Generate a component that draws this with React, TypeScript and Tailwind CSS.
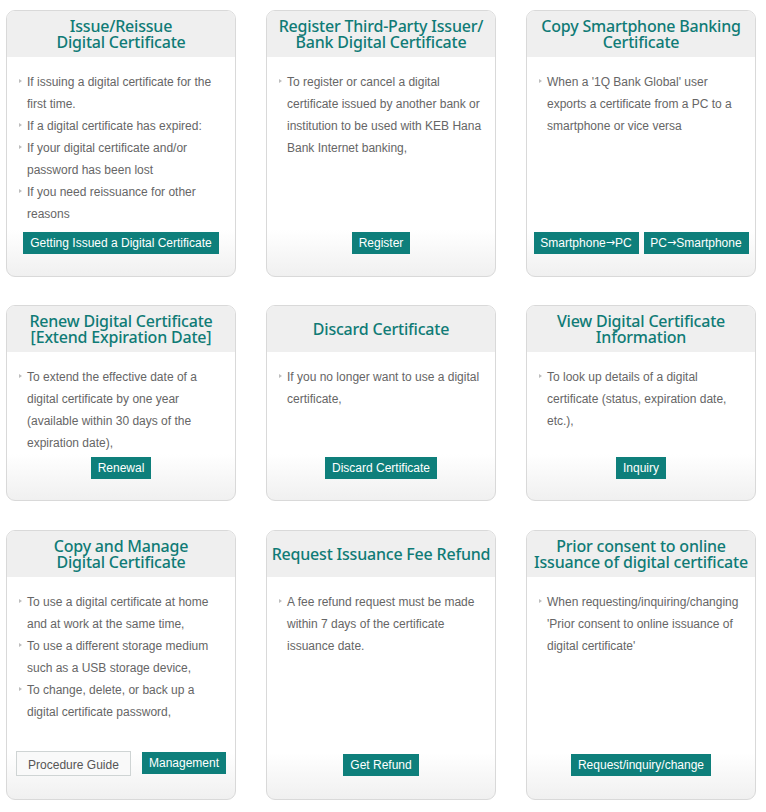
import React from "react";

type Btn = { label: string; ghost?: boolean };
type Item = { title: string[]; lines: string[]; buttons: Btn[] };

const rows: { h: string; pb: string; mt: string; items: Item[] }[] = [
  {
    h: "h-[267px]",
    pb: "pb-[22px]",
    mt: "",
    items: [
      {
        title: ["Issue/Reissue", "Digital Certificate"],
        lines: [
          "If issuing a digital certificate for the first time.",
          "If a digital certificate has expired:",
          "If your digital certificate and/or password has been lost",
          "If you need reissuance for other reasons",
        ],
        buttons: [{ label: "Getting Issued a Digital Certificate" }],
      },
      {
        title: ["Register Third-Party Issuer/", "Bank Digital Certificate"],
        lines: ["To register or cancel a digital certificate issued by another bank or institution to be used with KEB Hana Bank Internet banking,"],
        buttons: [{ label: "Register" }],
      },
      {
        title: ["Copy Smartphone Banking", "Certificate"],
        lines: ["When a '1Q Bank Global' user exports a certificate from a PC to a smartphone or vice versa"],
        buttons: [{ label: "Smartphone→PC" }, { label: "PC→Smartphone" }],
      },
    ],
  },
  {
    h: "h-[196px]",
    pb: "pb-[21px]",
    mt: "mt-[28px]",
    items: [
      {
        title: ["Renew Digital Certificate", "[Extend Expiration Date]"],
        lines: ["To extend the effective date of a digital certificate by one year (available within 30 days of the expiration date),"],
        buttons: [{ label: "Renewal" }],
      },
      {
        title: ["Discard Certificate"],
        lines: ["If you no longer want to use a digital certificate,"],
        buttons: [{ label: "Discard Certificate" }],
      },
      {
        title: ["View Digital Certificate", "Information"],
        lines: ["To look up details of a digital certificate (status, expiration date, etc.),"],
        buttons: [{ label: "Inquiry" }],
      },
    ],
  },
  {
    h: "h-[270px]",
    pb: "pb-[23px]",
    mt: "mt-[29px]",
    items: [
      {
        title: ["Copy and Manage", "Digital Certificate"],
        lines: [
          "To use a digital certificate at home and at work at the same time,",
          "To use a different storage medium such as a USB storage device,",
          "To change, delete, or back up a digital certificate password,",
        ],
        buttons: [{ label: "Procedure Guide", ghost: true }, { label: "Management" }],
      },
      {
        title: ["Request Issuance Fee Refund"],
        lines: ["A fee refund request must be made within 7 days of the certificate issuance date."],
        buttons: [{ label: "Get Refund" }],
      },
      {
        title: ["Prior consent to online", "Issuance of digital certificate"],
        lines: ["When requesting/inquiring/changing 'Prior consent to online issuance of digital certificate'"],
        buttons: [{ label: "Request/inquiry/change" }],
      },
    ],
  },
];

// the arrow in the copy buttons is drawn long in the original, so give it its own font
function Label({ text }: { text: string }) {
  const parts = text.split("→");
  if (parts.length < 2) return <>{text}</>;
  return (
    <>
      {parts[0]}
      <span className="[font-family:'DejaVu_Sans',sans-serif] text-[11px]">→</span>
      {parts[1]}
    </>
  );
}

function Card({ item, pb }: { item: Item; pb: string }) {
  const wide = item.buttons.length === 2 && !item.buttons[0].ghost;
  return (
    <div className="flex flex-col overflow-hidden rounded-[9px] border border-[#d9d9d9] bg-[linear-gradient(to_top,#f0f0f0,#ffffff_46px)]">
      {/* title band */}
      <div className="flex h-[46px] shrink-0 flex-col items-center justify-center bg-[#efefef] text-center text-[16px] font-medium leading-[16px] tracking-[-0.2px] text-[#0f7b76] [font-family:'Noto_Sans',sans-serif]">
        {item.title.map((t) => (
          <div key={t}>{t}</div>
        ))}
      </div>

      <ul className="pl-[12px] pr-[7px] pt-[14px] text-[12px] leading-[22px] text-[#666] [font-family:'Liberation_Sans',Arial,sans-serif]">
        {item.lines.map((l) => (
          <li key={l} className="relative pl-[8px]">
            <span className="absolute left-0 top-[8px] h-0 w-0 border-y-[2.5px] border-l-[3px] border-y-transparent border-l-[#bdbdbd]" />
            {l}
          </li>
        ))}
      </ul>

      <div className={`mt-auto flex items-start justify-center ${wide ? "gap-[5px]" : "gap-[11px]"} ${pb}`}>
        {item.buttons.map((b) =>
          b.ghost ? (
            <span
              key={b.label}
              className="mt-[-1px] flex h-[25px] w-[115px] items-center justify-center border border-[#cfd4d4] bg-[#f9f9f9] pt-[2px] text-[12px] text-[#555] [font-family:'Liberation_Sans',Arial,sans-serif]"
            >
              {b.label}
            </span>
          ) : (
            <span
              key={b.label}
              className={`flex h-[22px] items-center justify-center whitespace-nowrap bg-[#0e7f7b] text-[12px] text-white [font-family:'Liberation_Sans',Arial,sans-serif] ${wide ? "w-[105px]" : "px-[7px]"}`}
            >
              <Label text={b.label} />
            </span>
          )
        )}
      </div>
    </div>
  );
}

export default function App() {
  return (
    <div className="min-h-[812px] w-[766px] bg-white pl-[6px] pt-[10px]">
      <div className="flex w-[750px] flex-col">
        {rows.map((r, i) => (
          <div key={i} className={`grid grid-cols-[230px_230px_230px] gap-x-[30px] ${r.h} ${r.mt}`}>
            {r.items.map((it) => (
              <Card key={it.title.join()} item={it} pb={r.pb} />
            ))}
          </div>
        ))}
      </div>
    </div>
  );
}
